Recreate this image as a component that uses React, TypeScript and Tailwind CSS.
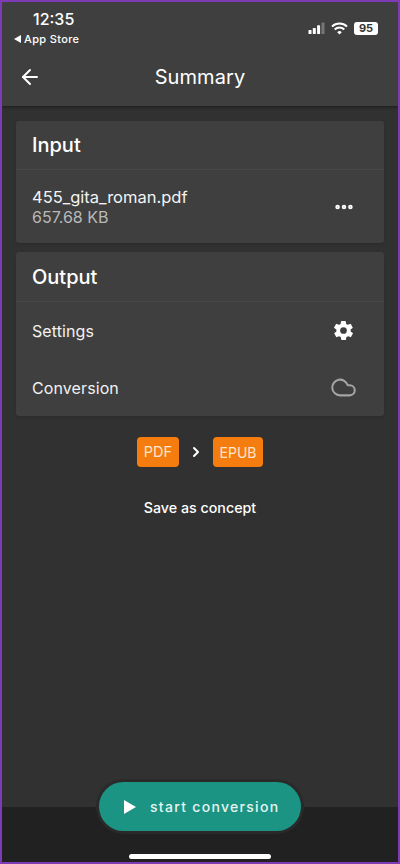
import React from 'react';
import { ArrowLeft, ChevronRight, Cloud, Ellipsis } from 'lucide-react';

const font = "font-['Inter',sans-serif]";

const StatusBar = () => (
  <div className="h-[56px] flex justify-between pl-[12px] pr-[20px] text-white">
    <div className="flex flex-col items-start">
      <span className="mt-[7px] ml-[19px] text-[16px] leading-[20px] font-medium">12:35</span>
      <span className="flex items-center gap-[3px] text-[11px] leading-[12px] font-medium tracking-[0.35px] mt-[4px]">
        <span className="w-0 h-0 border-y-[4px] border-y-transparent border-r-[7px] border-r-white" />
        App Store
      </span>
    </div>
    <div className="flex items-center gap-[6px] mt-[-4px] ml-auto">
      <svg width="17" height="12" viewBox="0 0 16 12">
        <rect x="0" y="8" width="3" height="4" rx="0.6" fill="#fff" />
        <rect x="4.3" y="6" width="3" height="6" rx="0.6" fill="#fff" />
        <rect x="8.6" y="3.2" width="3" height="8.8" rx="0.6" fill="#fff" />
        <rect x="13" y="0.5" width="3" height="11.5" rx="0.6" fill="#777" />
      </svg>
      <svg width="17" height="13" viewBox="0 0 17 13" fill="none" stroke="#fff" strokeWidth="2">
        <path d="M1 4.6a10.8 10.8 0 0 1 15 0" />
        <path d="M3.7 7.4a7 7 0 0 1 9.6 0" />
        <path d="M8.5 12.6 6.2 10.2a3.3 3.3 0 0 1 4.6 0Z" fill="#fff" stroke="none" />
      </svg>
      <div className="w-[24px] h-[13px] rounded-[3px] bg-white text-[#333] text-[11px] leading-[13px] font-bold text-center">
        95
      </div>
    </div>
  </div>
);

const Row = ({ label, icon, className }: { label: string; icon: React.ReactNode; className: string }) => (
  <div className={`flex items-center justify-between pl-[16px] pr-[28px] ${className}`}>
    <span className="text-[16px] tracking-[0.1px] text-[#f1f1f1] mt-[1px]">{label}</span>
    {icon}
  </div>
);

export default function App() {
  return (
    <div className={`${font} relative w-[400px] h-[864px] overflow-hidden border-2 border-[#7f3bb5] bg-[#313131] flex flex-col`}>
      <header className="h-[104px] bg-[#3f3f3f] shadow-[0_1px_3px_rgba(0,0,0,0.45)] shrink-0">
        <StatusBar />
        <div className="relative h-[40px] flex items-center justify-center">
          <ArrowLeft className="absolute left-[16px] top-[7px] w-[24px] h-[24px] text-white" strokeWidth={2} />
          <span className="text-white text-[20px] font-normal tracking-[0.1px] mt-[-2px]">Summary</span>
        </div>
      </header>

      <main className="flex-1 px-[14px] pt-[15px] flex flex-col gap-[9px]">
        <section className="h-[122px] bg-[#3f3f3f] rounded-[3px] shadow-sm">
          <div className="h-[49px] flex items-center px-[16px] border-b border-[#484848] text-white text-[20px] font-medium">
            Input
          </div>
          <div className="h-[73px] flex items-center justify-between pl-[16px] pr-[29px]">
            <div className="flex flex-col">
              <span className="text-[16.5px] leading-[20px] text-[#f3f3f3]">455_gita_roman.pdf</span>
              <span className="text-[16px] leading-[20px] text-[#b9b9b9]">657.68 KB</span>
            </div>
            <Ellipsis className="w-[22px] h-[22px] text-white" strokeWidth={3} />
          </div>
        </section>

        <section className="h-[164px] bg-[#3f3f3f] rounded-[3px] shadow-sm">
          <div className="h-[50px] flex items-center px-[16px] border-b border-[#484848] text-white text-[20px] font-medium">
            Output
          </div>
          <Row
            label="Settings"
            className="h-[57px]"
            icon={
              <svg width="23" height="23" viewBox="0 0 24 24" fill="#fff" className="mr-[1px]">
                <path d="M19.4 13a7.6 7.6 0 0 0 0-2l2.1-1.6a.5.5 0 0 0 .1-.6l-2-3.5a.5.5 0 0 0-.6-.2l-2.5 1a7.3 7.3 0 0 0-1.7-1l-.4-2.6a.5.5 0 0 0-.5-.4h-4a.5.5 0 0 0-.5.4l-.4 2.6a7.3 7.3 0 0 0-1.7 1l-2.5-1a.5.5 0 0 0-.6.2l-2 3.5a.5.5 0 0 0 .1.6L4.6 11a7.6 7.6 0 0 0 0 2l-2.1 1.6a.5.5 0 0 0-.1.6l2 3.5a.5.5 0 0 0 .6.2l2.5-1a7.3 7.3 0 0 0 1.7 1l.4 2.6a.5.5 0 0 0 .5.4h4a.5.5 0 0 0 .5-.4l.4-2.6a7.3 7.3 0 0 0 1.7-1l2.5 1a.5.5 0 0 0 .6-.2l2-3.5a.5.5 0 0 0-.1-.6ZM12 15.5a3.5 3.5 0 1 1 0-7 3.5 3.5 0 0 1 0 7Z" />
              </svg>
            }
          />
          <Row
            label="Conversion"
            className="h-[57px]"
            icon={<Cloud className="w-[27px] h-[27px] text-[#a5a5a5] mr-[-1px]" strokeWidth={1.8} />}
          />
        </section>

        <div className="mt-[12px] flex items-center justify-center gap-[9px]">
          <span className="h-[30px] w-[42px] rounded-[4px] bg-[#f57c0e] text-[#fde6cf] text-[14.5px] flex items-center justify-center">PDF</span>
          <ChevronRight className="w-[16px] h-[16px] text-white" strokeWidth={3} />
          <span className="h-[30px] w-[50px] rounded-[4px] bg-[#f57c0e] text-[#fde6cf] text-[14px] flex items-center justify-center">EPUB</span>
        </div>
        <div className="mt-[21px] text-center text-white text-[14.25px] font-medium">Save as concept</div>
      </main>

      <div className="h-[55px] bg-[#212121] shrink-0 flex items-end justify-center pb-[3px]">
        <div className="w-[142px] h-[5px] rounded-full bg-white" />
      </div>

      <button className="absolute left-[97px] top-[780px] w-[202px] h-[49px] rounded-full bg-[#1b9484] shadow-[0_0_0_3px_#2a2a2a] flex items-center pl-[25px] gap-[14px] text-[#e6f5f2]">
        <svg width="12" height="14" viewBox="0 0 12 14" fill="#fff">
          <path d="M0 0 12 7 0 14Z" />
        </svg>
        <span className="text-[14px] font-medium tracking-[1.3px]">start conversion</span>
      </button>
    </div>
  );
}
